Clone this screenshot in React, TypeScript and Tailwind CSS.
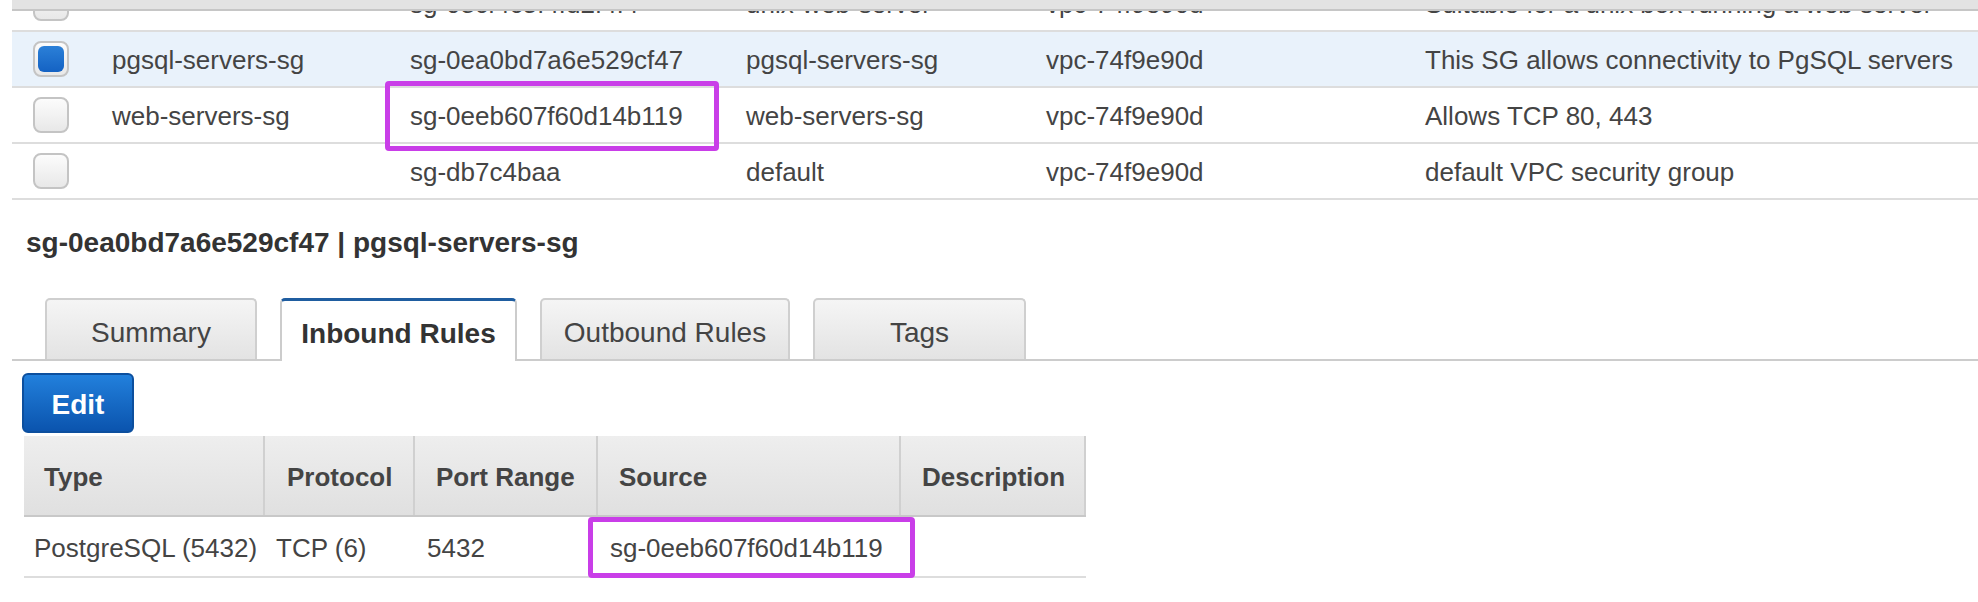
import React from "react";

function Checkbox({ checked }: { checked?: boolean }) {
  return (
    <div className="ml-[21px] w-[36px] h-[36px] rounded-[8px] border-2 border-[#c4c4c4] bg-linear-to-b from-[#fcfcfc] to-[#e8e8e8] flex items-center justify-center">
      {checked && (
        <div className="w-[26px] h-[26px] rounded-[6px] bg-linear-to-b from-[#2b80d8] to-[#1462c3]" />
      )}
    </div>
  );
}

type Row = {
  name: string;
  id: string;
  group: string;
  vpc: string;
  desc: string;
  selected?: boolean;
};

const rows: Row[] = [
  {
    name: "",
    id: "sg-08cf4c5f4fd2f4f4",
    group: "unix-web-server",
    vpc: "vpc-74f9e90d",
    desc: "Suitable for a unix box running a web server",
  },
  {
    name: "pgsql-servers-sg",
    id: "sg-0ea0bd7a6e529cf47",
    group: "pgsql-servers-sg",
    vpc: "vpc-74f9e90d",
    desc: "This SG allows connectivity to PgSQL servers",
    selected: true,
  },
  {
    name: "web-servers-sg",
    id: "sg-0eeb607f60d14b119",
    group: "web-servers-sg",
    vpc: "vpc-74f9e90d",
    desc: "Allows TCP 80, 443",
  },
  {
    name: "",
    id: "sg-db7c4baa",
    group: "default",
    vpc: "vpc-74f9e90d",
    desc: "default VPC security group",
  },
];

function Tab({ label, active, w }: { label: string; active?: boolean; w: string }) {
  if (active) {
    return (
      <div
        className={`${w} h-[63px] -mb-[2px] pt-[6px] bg-white border-2 border-b-0 border-[#cccccc] border-t-[3px] border-t-[#1f5da0] rounded-t-[5px] flex items-center justify-center font-bold text-[#333]`}
      >
        {label}
      </div>
    );
  }
  return (
    <div
      className={`${w} h-[61px] pt-[6px] bg-linear-to-b from-[#f5f5f5] to-[#e3e3e3] border-2 border-b-0 border-[#cfcfcf] rounded-t-[5px] flex items-center justify-center text-[#444]`}
    >
      {label}
    </div>
  );
}

export default function App() {
  return (
    <div className="w-[1978px] h-[602px] bg-white overflow-hidden text-[#444] text-[26px] font-['Liberation_Sans',Arial,Helvetica,sans-serif]">
      {/* security group list */}
      <div className="relative ml-[12px] h-[200px] overflow-hidden">
        <div className="relative z-10 h-[11px] bg-[#e3e3e3] border-b-2 border-[#c6c6c6]" />
        <div className="-mt-[35px]">
          {rows.map((r, i) => (
            <div
              key={i}
              className={`grid grid-cols-[100px_298px_336px_300px_379px_1fr] items-center h-[56px] border-b-2 border-[#dddddd] whitespace-nowrap ${
                r.selected ? "bg-[#e9f2fb]" : "bg-white"
              }`}
            >
              <div>
                <Checkbox checked={r.selected} />
              </div>
              <div className="pt-[2px]">{r.name}</div>
              <div className="pt-[2px]">{r.id}</div>
              <div className="pt-[2px]">{r.group}</div>
              <div className="pt-[2px]">{r.vpc}</div>
              <div className="pt-[2px]">{r.desc}</div>
            </div>
          ))}
        </div>
        <div className="absolute z-20 left-[373px] top-[81px] w-[334px] h-[70px] border-[5px] border-[#c93ee8] rounded-[4px]" />
      </div>

      {/* heading */}
      <div className="mt-[29px] ml-[26px] text-[28px] leading-none font-bold text-[#333]">
        sg-0ea0bd7a6e529cf47 | pgsql-servers-sg
      </div>

      {/* tabs */}
      <div className="mt-[41px] ml-[12px] pl-[33px] flex items-end gap-[23px] border-b-2 border-[#cccccc] text-[28px]">
        <Tab label="Summary" w="w-[212px]" />
        <Tab label="Inbound Rules" w="w-[237px]" active />
        <Tab label="Outbound Rules" w="w-[250px]" />
        <Tab label="Tags" w="w-[213px]" />
      </div>

      {/* edit button */}
      <div className="mt-[12px] ml-[22px]">
        <div className="w-[112px] h-[60px] pt-[4px] rounded-[6px] border-2 border-[#0c4f9e] bg-linear-to-b from-[#2280dc] to-[#0b54ae] flex items-center justify-center text-white font-bold text-[28px]">
          Edit
        </div>
      </div>

      {/* inbound rules table */}
      <div className="relative mt-[3px] ml-[24px] w-[1062px]">
        <div className="grid grid-cols-[241px_150px_183px_303px_185px] h-[81px] border-b-2 border-[#c8c8c8] bg-linear-to-b from-[#eeeeee] to-[#e0e0e0] font-bold text-[#444]">
          <div className="flex items-center pt-[4px] pl-[20px] border-r-2 border-[#d0d0d0]">Type</div>
          <div className="flex items-center pt-[4px] pl-[22px] border-r-2 border-[#d0d0d0]">Protocol</div>
          <div className="flex items-center pt-[4px] pl-[21px] border-r-2 border-[#d0d0d0]">Port Range</div>
          <div className="flex items-center pt-[4px] pl-[21px] border-r-2 border-[#d0d0d0]">Source</div>
          <div className="flex items-center pt-[4px] pl-[21px] border-r-2 border-[#d0d0d0]">Description</div>
        </div>
        <div className="grid grid-cols-[241px_150px_183px_303px_185px] h-[61px] border-b-2 border-[#dddddd] whitespace-nowrap">
          <div className="flex items-center pt-[4px] pl-[10px]">PostgreSQL (5432)</div>
          <div className="flex items-center pt-[4px] pl-[11px]">TCP (6)</div>
          <div className="flex items-center pt-[4px] pl-[12px]">5432</div>
          <div className="flex items-center pt-[4px] pl-[12px]">sg-0eeb607f60d14b119</div>
          <div />
        </div>
        <div className="absolute left-[564px] top-[81px] w-[327px] h-[61px] border-[5px] border-[#c93ee8] rounded-[4px]" />
      </div>
    </div>
  );
}
